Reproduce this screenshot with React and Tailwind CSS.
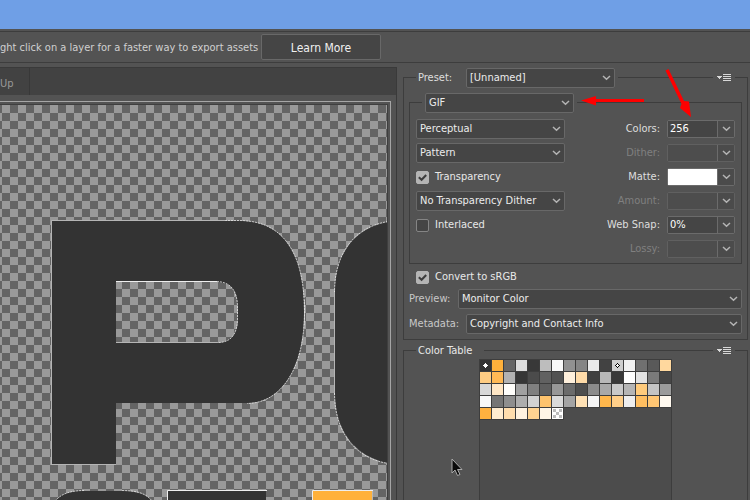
import React, { useState } from 'react';

const paletteRows = [
  ['#333333', '#ffb13b', '#666666', '#dedede', '#383838', '#bdbdbd', '#fafafa', '#919191', '#858585', '#ebebeb', '#424242', '#cfcfcf', '#f2f2f2', '#707070', '#595959', '#ffd89e'],
  ['#ffcd83', '#ffb955', '#b2b2b2', '#363636', '#4b4b4b', '#616161', '#525252', '#fff0dc', '#ffdba8', '#404040', '#b8b8b8', '#393939', '#ffffff', '#e3e3e3', '#7a7a7a', '#464646'],
  ['#d8d8d8', '#ffe7c6', '#fffefb', '#a0a0a0', '#808080', '#5e5e5e', '#979797', '#6b6b6b', '#4e4e4e', '#8b8b8b', '#a8a8a8', '#c9c9c9', '#b5b5b5', '#ffcb7c', '#c4c4c4', '#9b9b9b'],
  ['#f8f8f8', '#757575', '#8e8e8e', '#adadad', '#d2d2d2', '#fec36d', '#dadada', '#a4a4a4', '#ffe1b5', '#f5f5f5', '#ffb74c', '#ffcf89', '#eeeeee', '#ffbe60', '#ffc673', '#fff9ef'],
  ['#ffb13f', '#ffeccf', '#ffddad', '#fff2df', '#ffd391', '#fff5e6', 'transparent'],
];

const Chevron = () => (
  <svg width="9" height="6" viewBox="0 0 9 6" fill="none" stroke="#b4b4b4" strokeWidth="1.5">
    <path d="M1 1 L4.5 4.3 L8 1" />
  </svg>
);

const MenuIcon = () => (
  <svg width="14" height="8" viewBox="0 0 14 8" fill="#d8d8d8" shapeRendering="crispEdges">
    <path d="M0 2h5v1H4v1H3v1H2V4H1V3H0z" />
    <path d="M6 0h8v1H6zM6 2h8v1H6zM6 4h8v1H6zM6 6h8v1H6z" />
  </svg>
);

const Select = ({ id, label, value, className }) => (
  <div className={`relative h-5 ${className}`}>
    <select
      id={id}
      aria-label={label}
      defaultValue={value}
      className="block h-5 w-full appearance-none rounded-xs border border-[#686868] bg-[#454545] pr-5 pl-[3px] leading-4 text-[#ececec] outline-none"
    >
      <option>{value}</option>
    </select>
    <span className="pointer-events-none absolute inset-y-0 right-1 flex items-center">
      <Chevron />
    </span>
  </div>
);

const Checkbox = ({ label, initial }) => {
  const [checked, setChecked] = useState(initial);

  return (
    <label className="flex h-5 items-center gap-[6px] text-[#e8e8e8]">
      <span className="relative flex size-[13px]">
        <input
          type="checkbox"
          checked={checked}
          onChange={() => setChecked(!checked)}
          className="size-[13px] appearance-none rounded-xs border border-[#858585] bg-[#454545] checked:border-[#b4b4b4] checked:bg-[#b4b4b4]"
        />
        {checked && (
          <svg className="pointer-events-none absolute inset-0" width="13" height="13" viewBox="0 0 13 13" fill="none" stroke="#3c3c3c" strokeWidth="2">
            <path d="M2.8 6.2 L5.6 8.8 L10.2 4" />
          </svg>
        )}
      </span>
      {label}
    </label>
  );
};

const ComboField = ({ id, label, value, disabled, swatch }) => (
  <div className="flex h-5 items-center justify-end gap-[7px]">
    <label htmlFor={id} className={disabled ? 'text-[#808080]' : 'text-[#dedede]'}>{label}</label>
    <div className={`flex h-[18px] w-[68px] rounded-xs border ${disabled ? 'border-[#606060]' : 'border-[#6b6b6b]'}`}>
      <input
        id={id}
        type="text"
        defaultValue={value}
        disabled={disabled}
        className={`h-4 w-[49px] pl-[2px] text-white outline-none ${swatch ? 'bg-white' : disabled ? 'bg-[#4d4d4d]' : 'bg-[#454545]'}`}
      />
      <button type="button" aria-label={label} className="flex h-4 flex-1 items-center justify-center border-l border-[#6b6b6b] bg-[#4b4b4b]">
        <Chevron />
      </button>
    </div>
  </div>
);

const Swatch = ({ color, row, column }) => (
  <button type="button" aria-label={color} className="relative size-3 border-r border-b border-[#3d3d3d]" style={{ backgroundColor: color }}>
    {color === 'transparent' && (
      <svg className="block" width="11" height="11" viewBox="0 0 11 11" shapeRendering="crispEdges">
        <path fill="#fff" d="M0 0h11v11H0z" />
        <path fill="#bbb" d="M1 1h3v3H1zM7 1h3v3H7zM4 4h3v3H4zM1 7h3v3H1zM7 7h3v3H7z" />
      </svg>
    )}
    {row === 0 && (column === 0 || column === 11) && (
      <svg className="block" width="11" height="11" viewBox="0 0 11 11" shapeRendering="crispEdges">
        <path fill={column ? '#000' : '#fff'} d="M5 3h1v1h1v1h1v1H7v1H6v1H5V7H4V6H3V5h1V4h1z" />
        {column === 11 && <path fill="#fff" d="M5 4h1v1h1v1H6v1H5V6H4V5h1z" />}
      </svg>
    )}
  </button>
);

const Artwork = () => (
  <svg className="block h-full w-full">
    <defs>
      <pattern id="checker" x="2" y="0" width="16" height="16" patternUnits="userSpaceOnUse">
        <path fill="#646464" d="M0 0h16v16H0z" />
        <path fill="#999" d="M0 0h8v8H0zM8 8h8v8H8z" />
      </pattern>
    </defs>
    <rect width="100%" height="100%" fill="url(#checker)" />
    <path
      fill="#333"
      fillRule="evenodd"
      d="M52 116H240C282 116 304 146 304 207C304 268 278 298 247 298H116V359H52zM116 177V238H216C231 238 238 229 238 213V203C238 186 231 177 216 177z"
    />
    <path fill="#333" d="M388 117C354 123 335 149 335 187V288C335 327 356 352 388 358z" />
    <path fill="#333" d="M55 396C62 388 72 386 84 386H122C136 386 146 389 152 396V600H55z" />
    <path fill="#333" d="M168 386h98v300h-98z" />
    <path fill="#ffb13b" d="M313 386h60v300h-60z" />
    <g fill="none" stroke="#eee" strokeWidth="1">
      <path stroke="#b5b5b5" d="M51.5 359V115.5H225M51 359.5H116" />
      <path d="M116 176.5H217M167.5 396V385.5H267M312.5 396V385.5H373" />
      <path stroke="#b5b5b5" d="M116 237.5H217M334.5 185V290M372.5 386V396M304.5 195V220" />
      <path
        strokeOpacity="0.75"
        strokeDasharray="2 1"
        d="M225 115.5H240C282 116 304.500 146 304.500 207C304.500 268 278 298.500 247 298.500M217 176.500C231 177 237.500 186 237.500 203V213C237.500 229 231 238 217 237.500M388 116.500C354 122 334.500 149 334.500 187M334.500 288C334.500 327 355 353 388 358.500M55 396C62 388 72 385.500 84 385.500M122 385.500C136 385.500 146 388 152 396"
      />
    </g>
  </svg>
);

const App = () => {
  return (
    <div className="flex min-h-screen flex-col overflow-hidden bg-[#535353] font-['DejaVu_Sans_Condensed','DejaVu_Sans',sans-serif] text-[11px] leading-4">
      <div className="h-[29px] bg-[#6f9fe6]" />
      <header className="mt-0.5 flex h-8 items-center border-y border-[#3d3d3d]">
        <p className="w-[249px] pt-px whitespace-nowrap text-[#d0d0d0]">
          ght click on a layer for a faster way to export assets
        </p>
        <button type="button" className="ml-3 h-[26px] w-[120px] rounded-xs border border-[#686868] bg-[#454545] pt-px text-xs text-[#f0f0f0]">
          Learn More
        </button>
      </header>

      <div className="mt-1 flex flex-1">
        <main className="flex min-w-0 flex-1 flex-col border-t border-r border-[#3a3a3a]">
          <nav className="flex h-[27px] bg-[#424242]">
            <button type="button" className="w-[30px] border-r border-[#383838] pt-1 text-left text-[#999]">
              Up
            </button>
          </nav>
          <div className="mt-1.5 mr-[5px] flex flex-1 border-t border-r border-[#a6a6a6] pt-0.5 pr-0.5">
            <div className="flex-1 overflow-hidden border-t border-r border-[#3f3f3f]">
              <Artwork />
            </div>
          </div>
        </main>

        <aside className="relative flex w-[353px] shrink-0 flex-col pt-[10px] pr-0.5 pl-1.5">
          <section className="border border-[#3d3d3d] pb-[5px]">
            <div className="-mt-[10px] flex h-5 items-center justify-between px-3">
              <div className="flex items-center bg-[#535353] pr-[3px] pl-0.5">
                <label htmlFor="preset" className="w-12 text-[#dedede]">Preset:</label>
                <Select id="preset" value="[Unnamed]" className="w-[149px]" />
              </div>
              <button type="button" aria-label="Preset menu" className="bg-[#535353] px-1">
                <MenuIcon />
              </button>
            </div>

            <div className="mx-[5px] mt-[14px] border border-[#3d3d3d] pb-1">
              <div className="-mt-[10px] flex px-3">
                <div className="bg-[#535353] px-[3px]">
                  <Select label="Format" value="GIF" className="w-[149px]" />
                </div>
              </div>
              <div className="mt-1.5 flex justify-between px-1.5">
                <div className="flex w-[149px] flex-col gap-1">
                  <Select label="Reduction" value="Perceptual" className="w-full" />
                  <Select label="Dither method" value="Pattern" className="w-full" />
                  <Checkbox label="Transparency" initial={true} />
                  <Select label="Transparency dither" value="No Transparency Dither" className="w-full" />
                  <Checkbox label="Interlaced" initial={false} />
                </div>
                <div className="flex flex-col gap-1">
                  <ComboField id="colors" label="Colors:" value="256" />
                  <ComboField id="dither" label="Dither:" disabled />
                  <ComboField id="matte" label="Matte:" swatch />
                  <ComboField id="amount" label="Amount:" disabled />
                  <ComboField id="websnap" label="Web Snap:" value="0%" />
                  <ComboField id="lossy" label="Lossy:" disabled />
                </div>
              </div>
            </div>

            <div className="mt-[3px] ml-3">
              <Checkbox label="Convert to sRGB" initial={true} />
            </div>
            <div className="mx-[5px] mt-0.5 flex items-center">
              <label htmlFor="preview" className="w-[49px] text-[#c8c8c8]">Preview:</label>
              <Select id="preview" value="Monitor Color" className="flex-1" />
            </div>
            <div className="mx-[5px] mt-[5px] flex items-center">
              <label htmlFor="metadata" className="w-[57px] text-[#c8c8c8]">Metadata:</label>
              <Select id="metadata" value="Copyright and Contact Info" className="flex-1" />
            </div>
          </section>

          <section className="mt-[10px] flex flex-1 flex-col border border-b-0 border-[#3d3d3d]">
            <div className="-mt-2 flex h-4 items-center justify-between px-3">
              <h2 className="bg-[#535353] pr-3 pl-0.5 text-[#e8e8e8]">Color Table</h2>
              <button type="button" aria-label="Color table menu" className="bg-[#535353] px-1">
                <MenuIcon />
              </button>
            </div>
            <div className="ml-[75px] w-[193px] flex-1 border border-b-0 border-[#3d3d3d] bg-[#4c4c4c]">
              {paletteRows.map((colors, row) => (
                <div key={row} className="flex w-48">
                  {colors.map((color, column) => (
                    <Swatch key={color} color={color} row={row} column={column} />
                  ))}
                </div>
              ))}
            </div>
          </section>

          {/* annotation arrows */}
          <svg className="pointer-events-none absolute top-0 left-[184px]" width="120" height="56" viewBox="0 0 120 56" fill="#f00">
            <path d="M0 33.5L15 29V32H63V35H15V38.500z" />
            <path d="M84.500 3.500L87.500 2L103 34L108 34.500L110 50L99 41L100.500 37z" />
          </svg>
          {/* mouse pointer */}
          <svg className="pointer-events-none absolute top-[391px] left-[54px]" width="12" height="19" viewBox="0 0 12 19" fill="#0a0a0a" stroke="#aaa" strokeWidth="1">
            <path d="M1 1V15L4 12L6.500 17.500L9 16.500L6.500 11.500H11z" />
          </svg>
        </aside>
      </div>
    </div>
  );
};

export default App;
